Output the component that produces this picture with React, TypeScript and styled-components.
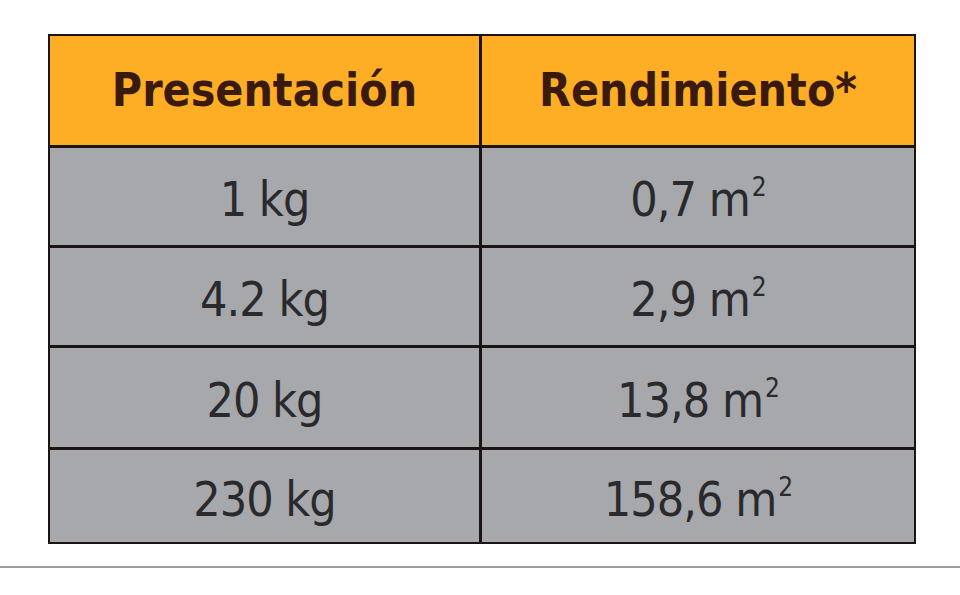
import React from "react";
import styled, { createGlobalStyle } from "styled-components";

const Global = createGlobalStyle`
  html, body { margin: 0; padding: 0; background: #ffffff; }
  body { width: 960px; height: 595px; overflow: hidden; }
`;

const Page = styled.div`
  display: flex;
  flex-direction: column;
  width: 960px;
  height: 595px;
  padding-top: 34px;
  box-sizing: border-box;
`;

const Table = styled.div`
  margin-left: 48px;
  width: 868px;
  display: grid;
  grid-template-columns: 429px 1fr;
  grid-template-rows: 109px 97px 97px 99px 92px;
  border: 2px solid #1c1412;
  box-sizing: border-box;
  background: #1c1412;
  gap: 3px;
  font-family: "DejaVu Sans Condensed", "DejaVu Sans", sans-serif;
  font-stretch: condensed;
`;

const HeadCell = styled.div`
  background: #fdae24;
  color: #3a1a0c;
  font-weight: bold;
  font-size: 46px;
  display: flex;
  align-items: center;
  justify-content: center;
  padding-bottom: 2px;
`;

const Cell = styled.div`
  background: #a7a8ac;
  color: #2a2a2c;
  font-size: 48px;
  display: flex;
  align-items: center;
  justify-content: center;
  letter-spacing: -1px;
  padding-top: 5px;
`;

const Sup = styled.span`
  font-size: 26px;
  align-self: center;
  position: relative;
  top: -12px;
  margin-left: 2px;
`;

const Rule = styled.div`
  margin-top: 22px;
  height: 2px;
  background: #9c9c9c;
  width: 100%;
`;

const rows = [
  ["1 kg", "0,7 m"],
  ["4.2 kg", "2,9 m"],
  ["20 kg", "13,8 m"],
  ["230 kg", "158,6 m"],
];

export default function App() {
  return (
    <>
      <Global />
      <Page>
        <Table>
          <HeadCell>Presentación</HeadCell>
          <HeadCell>Rendimiento*</HeadCell>
          {rows.map(([a, b]) => (
            <React.Fragment key={a}>
              <Cell>{a}</Cell>
              <Cell>
                {b}
                <Sup>2</Sup>
              </Cell>
            </React.Fragment>
          ))}
        </Table>
        <Rule />
      </Page>
    </>
  );
}
